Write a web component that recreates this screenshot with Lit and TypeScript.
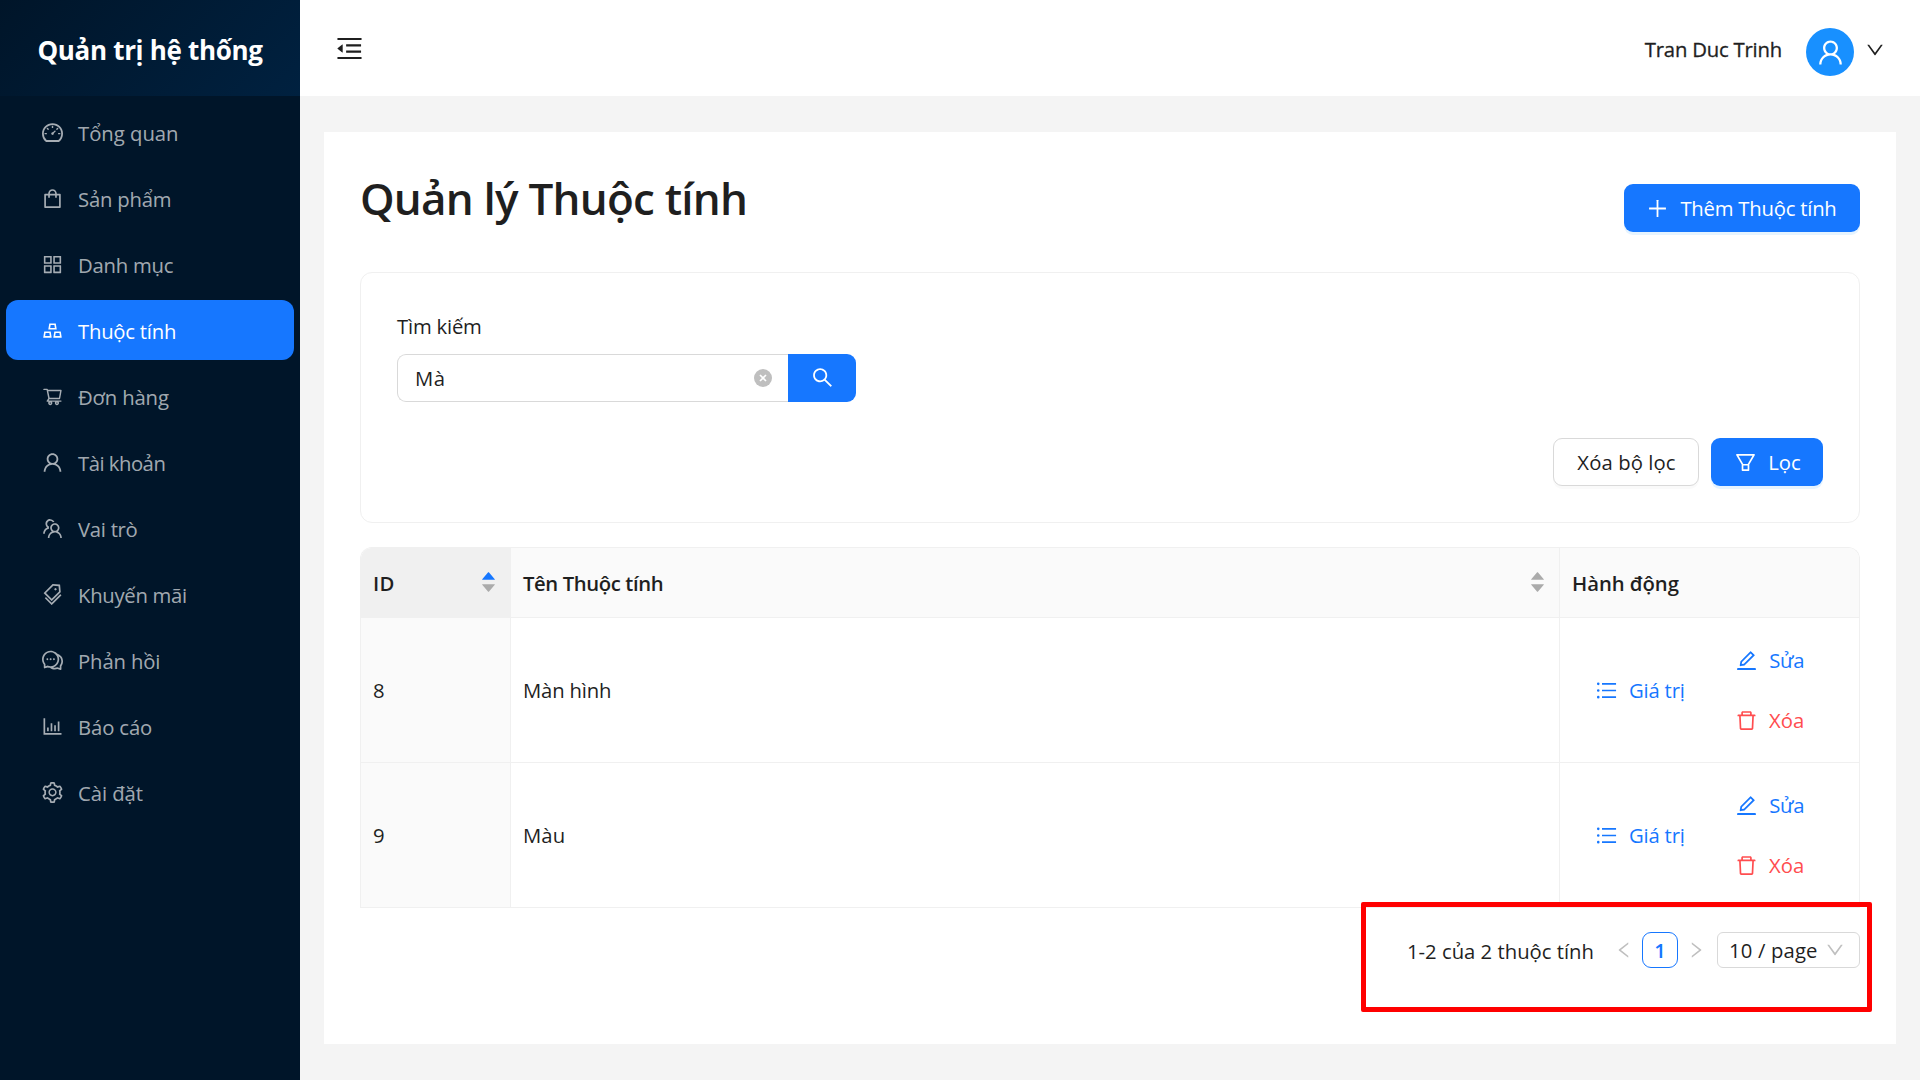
import { LitElement, html, css, svg } from "lit";
import { styleMap } from "lit/directives/style-map.js";
import { classMap } from "lit/directives/class-map.js";

interface Icon {
  box?: string;
  paths: string[];
}

const ICONS: Record<string, Icon> = {
  menuFold: {
    paths: [
      "M408 442h480c4.4 0 8-3.6 8-8v-56c0-4.4-3.6-8-8-8H408c-4.4 0-8 3.6-8 8v56c0 4.4 3.6 8 8 8zm-8 204c0 4.4 3.6 8 8 8h480c4.4 0 8-3.6 8-8v-56c0-4.4-3.6-8-8-8H408c-4.4 0-8 3.6-8 8v56zm504-486H120c-4.4 0-8 3.6-8 8v56c0 4.4 3.6 8 8 8h784c4.4 0 8-3.6 8-8v-56c0-4.4-3.6-8-8-8zm0 632H120c-4.4 0-8 3.6-8 8v56c0 4.4 3.6 8 8 8h784c4.4 0 8-3.6 8-8v-56c0-4.4-3.6-8-8-8zM115.4 518.9L271.7 642c5.8 4.6 14.4.5 14.4-6.9V388.9c0-7.4-8.5-11.5-14.4-6.9L115.4 505.1a8.74 8.74 0 000 13.8z",
    ],
  },
  dashboard: {
    paths: [
      "M924.8 385.6a446.7 446.7 0 00-96-142.4 446.7 446.7 0 00-142.4-96C631.1 123.8 572.5 112 512 112s-119.1 11.8-174.4 35.2a446.7 446.7 0 00-142.4 96 446.7 446.7 0 00-96 142.4C75.8 440.9 64 499.5 64 560c0 132.7 58.3 257.7 159.9 343.1l1.7 1.4c5.8 4.8 13.1 7.5 20.6 7.5h531.7c7.5 0 14.8-2.7 20.6-7.5l1.7-1.4C901.7 817.7 960 692.7 960 560c0-60.5-11.9-119.1-35.2-174.4zM761.4 836H262.6A371.12 371.12 0 01140 560c0-99.4 38.7-192.8 109-263 70.3-70.3 163.7-109 263-109 99.4 0 192.8 38.7 263 109 70.3 70.3 109 163.7 109 263 0 105.6-44.5 205.5-122.6 276zM623.5 421.5a8.03 8.03 0 00-11.3 0L527.7 506c-18.7-5-39.4-.2-54.1 14.5a55.95 55.95 0 000 79.2 55.95 55.95 0 0079.2 0 55.87 55.87 0 0014.5-54.1l84.5-84.5c3.1-3.1 3.1-8.2 0-11.3l-28.3-28.3zM490 320h44c4.4 0 8-3.6 8-8v-80c0-4.4-3.6-8-8-8h-44c-4.4 0-8 3.6-8 8v80c0 4.4 3.6 8 8 8zm260 218v44c0 4.4 3.6 8 8 8h80c4.4 0 8-3.6 8-8v-44c0-4.4-3.6-8-8-8h-80c-4.4 0-8 3.6-8 8zm12.7-197.2l-31.1-31.1a8.03 8.03 0 00-11.3 0l-56.6 56.6a8.03 8.03 0 000 11.3l31.1 31.1c3.1 3.1 8.2 3.1 11.3 0l56.6-56.6c3.1-3.1 3.1-8.2 0-11.3zm-458.6-31.1a8.03 8.03 0 00-11.3 0l-31.1 31.1a8.03 8.03 0 000 11.3l56.6 56.6c3.1 3.1 8.2 3.1 11.3 0l31.1-31.1c3.1-3.1 3.1-8.2 0-11.3l-56.6-56.6zM262 530h-80c-4.4 0-8 3.6-8 8v44c0 4.4 3.6 8 8 8h80c4.4 0 8-3.6 8-8v-44c0-4.4-3.6-8-8-8z",
    ],
  },
  shopping: {
    paths: [
      "M832 312H696v-16c0-101.6-82.4-184-184-184s-184 82.4-184 184v16H192c-17.7 0-32 14.3-32 32v536c0 17.7 14.3 32 32 32h640c17.7 0 32-14.3 32-32V344c0-17.7-14.3-32-32-32zm-432-16c0-61.9 50.1-112 112-112s112 50.1 112 112v16H400v-16zm392 544H232V384h96v88c0 4.4 3.6 8 8 8h56c4.4 0 8-3.6 8-8v-88h224v88c0 4.4 3.6 8 8 8h56c4.4 0 8-3.6 8-8v-88h96v456z",
    ],
  },
  appstore: {
    paths: [
      "M464 144H160c-8.8 0-16 7.2-16 16v304c0 8.8 7.2 16 16 16h304c8.8 0 16-7.2 16-16V160c0-8.8-7.2-16-16-16zm-52 268H212V212h200v200zm452-268H560c-8.8 0-16 7.2-16 16v304c0 8.8 7.2 16 16 16h304c8.8 0 16-7.2 16-16V160c0-8.8-7.2-16-16-16zm-52 268H612V212h200v200zM464 544H160c-8.8 0-16 7.2-16 16v304c0 8.8 7.2 16 16 16h304c8.8 0 16-7.2 16-16V560c0-8.8-7.2-16-16-16zm-52 268H212V612h200v200zm452-268H560c-8.8 0-16 7.2-16 16v304c0 8.8 7.2 16 16 16h304c8.8 0 16-7.2 16-16V560c0-8.8-7.2-16-16-16zm-52 268H612V612h200v200z",
    ],
  },
  gold: {
    paths: [
      "M342 472h342c.4 0 .9 0 1.3-.1 4.4-.7 7.3-4.8 6.6-9.2l-40.2-248c-.6-3.9-4-6.7-7.9-6.7H382.2c-3.9 0-7.3 2.8-7.9 6.7l-40.2 248c-.1.4-.1.9-.1 1.3 0 4.4 3.6 8 8 8zm91.2-196h159.5l20.7 128h-201l20.8-128zm2.5 282.7c-.6-3.9-4-6.7-7.9-6.7H166.2c-3.9 0-7.3 2.8-7.9 6.7l-40.2 248c-.1.4-.1.9-.1 1.3 0 4.4 3.6 8 8 8h342c.4 0 .9 0 1.3-.1 4.4-.7 7.3-4.8 6.6-9.2l-40.2-248zM196.5 748l20.7-128h159.5l20.7 128H196.5zm709.4 58.7l-40.2-248c-.6-3.9-4-6.7-7.9-6.7H596.2c-3.9 0-7.3 2.8-7.9 6.7l-40.2 248c-.1.4-.1.9-.1 1.3 0 4.4 3.6 8 8 8h342c.4 0 .9 0 1.3-.1 4.3-.7 7.3-4.8 6.6-9.2zM626.5 748l20.7-128h159.5l20.7 128H626.5z",
    ],
  },
  cart: {
    box: "0 0 1024 1024",
    paths: [
      "M922.9 701.9H327.4l29.9-60.9 496.8-.9c16.8 0 31.2-12 34.2-28.6l68.8-385.1c1.8-10.1-.9-20.5-7.5-28.4a34.99 34.99 0 00-26.6-12.5l-632-2.1-5.4-25.4c-3.4-16.2-18-28-34.6-28H96.5a35.3 35.3 0 100 70.6h125.9L246 312.8l58.1 281.3-74.8 122.1a34.96 34.96 0 00-3 36.8c6 11.9 18.1 19.4 31.5 19.4h62.8a102.43 102.43 0 00-20.6 61.7c0 56.6 46 102.6 102.6 102.6s102.6-46 102.6-102.6c0-22.3-7.4-44-20.6-61.7h161.1a102.43 102.43 0 00-20.6 61.7c0 56.6 46 102.6 102.6 102.6s102.6-46 102.6-102.6c0-22.3-7.4-44-20.6-61.7H923c19.4 0 35.3-15.8 35.3-35.3a35.42 35.42 0 00-35.4-35.2zM305.7 253l575.8 1.9-56.4 315.8-452.3.8L305.7 253zm96.9 612.7c-17.4 0-31.6-14.2-31.6-31.6 0-17.4 14.2-31.6 31.6-31.6s31.6 14.2 31.6 31.6a31.6 31.6 0 01-31.6 31.6zm325.1 0c-17.4 0-31.6-14.2-31.6-31.6 0-17.4 14.2-31.6 31.6-31.6s31.6 14.2 31.6 31.6a31.6 31.6 0 01-31.6 31.6z",
    ],
  },
  user: {
    paths: [
      "M858.5 763.6a374 374 0 00-80.6-119.5 375.63 375.63 0 00-119.5-80.6c-.4-.2-.8-.3-1.2-.5C719.5 518 760 444.7 760 362c0-137-111-248-248-248S264 225 264 362c0 82.7 40.5 156 102.8 201.1-.4.2-.8.3-1.2.5-44.8 18.9-85 46-119.5 80.6a375.63 375.63 0 00-80.6 119.5A371.7 371.7 0 00136 901.8a8 8 0 008 8.2h60c4.4 0 7.9-3.5 8-7.8 2-77.2 33-149.5 87.8-204.3 56.7-56.7 132-87.9 212.2-87.9s155.5 31.2 212.2 87.9C779 752.7 810 825 812 902.2c.1 4.4 3.6 7.8 8 7.8h60a8 8 0 008-8.2c-1-47.8-10.9-94.3-29.5-138.2zM512 534c-45.9 0-89.1-17.9-121.6-50.4S340 407.9 340 362c0-45.9 17.9-89.1 50.4-121.6S466.1 190 512 190s89.1 17.9 121.6 50.4S684 316.1 684 362c0 45.9-17.9 89.1-50.4 121.6S557.9 534 512 534z",
    ],
  },
  team: {
    paths: [
      "M824.2 699.9a301.55 301.55 0 00-86.4-60.4C783.1 602.8 812 546.8 812 484c0-110.8-92.4-201.7-203.2-200-109.1 1.7-197 90.6-197 200 0 62.8 29 118.8 74.2 155.5a300.95 300.95 0 00-86.4 60.4C345 754.6 314 826.8 312 903.8a8 8 0 008 8.2h56c4.3 0 7.9-3.4 8-7.7 1.9-58 25.4-112.3 66.7-153.5A226.62 226.62 0 01612 684c60.9 0 118.2 23.7 161.3 66.8C814.6 792 838 846.3 840 904.3c.1 4.3 3.7 7.7 8 7.7h56a8 8 0 008-8.2c-2-77-33-149.2-87.8-203.9zM612 612c-34.2 0-66.4-13.3-90.5-37.5a126.86 126.86 0 01-37.5-91.8c.3-32.8 13.4-64.5 36.3-88 24-24.6 56.1-38.3 90.4-38.7 33.9-.3 66.8 12.9 91 36.6 24.8 24.3 38.4 56.8 38.4 91.4 0 34.2-13.3 66.3-37.5 90.5A127.3 127.3 0 01612 612zM361.5 510.4c-.9-8.7-1.4-17.5-1.4-26.4 0-15.9 1.5-31.4 4.3-46.5.7-3.6-1.2-7.3-4.5-8.8-13.6-6.1-26.1-14.5-36.9-25.1a127.54 127.54 0 01-38.7-95.4c.9-32.1 13.8-62.6 36.3-85.6 24.7-25.3 57.9-39.1 93.2-38.7 31.9.3 62.7 12.6 86 34.4 7.9 7.4 14.7 15.6 20.4 24.4 2 3.1 5.9 4.4 9.3 3.2 17.6-6.1 36.2-10.4 55.3-12.4 5.6-.6 8.8-6.6 6.3-11.6-32.5-64.3-98.9-108.7-175.7-109.9-110.9-1.7-203.3 89.2-203.3 199.9 0 62.8 28.9 118.8 74.2 155.5-31.8 14.7-61.1 35-86.5 60.4-54.8 54.7-85.8 126.9-87.8 204a8 8 0 008 8.2h56.1c4.3 0 7.9-3.4 8-7.7 1.9-58 25.4-112.3 66.7-153.5 29.4-29.4 65.4-49.8 104.7-59.7 3.9-1 6.5-4.7 6-8.7z",
    ],
  },
  tags: {
    paths: [
      "M483.2 790.3L861.4 412c1.7-1.7 2.5-4 2.3-6.3l-25.5-301.4c-.7-7.8-6.8-13.9-14.6-14.6L522.2 64.3c-2.3-.2-4.7.6-6.3 2.3L137.7 444.8a8.03 8.03 0 000 11.3l334.2 334.2c3.1 3.2 8.2 3.2 11.3 0zm62.6-651.7l224.6 19 19 224.6L477.5 694 233.9 450.5l311.9-311.9zm60.16 186.23a48 48 0 1067.88-67.89 48 48 0 10-67.88 67.89zM889.7 539.8l-39.6-39.5a8.03 8.03 0 00-11.3 0l-362 361.3-237.6-237a8.03 8.03 0 00-11.3 0l-39.6 39.5a8.03 8.03 0 000 11.3l243.2 242.8 39.6 39.5c3.1 3.1 8.2 3.1 11.3 0l407.3-406.6c3.1-3.1 3.1-8.2 0-11.3z",
    ],
  },
  comment: {
    paths: [
      "M573 421c-23.1 0-41 17.9-41 40s17.9 40 41 40c21.1 0 39-17.9 39-40s-17.9-40-39-40zm-280 0c-23.1 0-41 17.9-41 40s17.9 40 41 40c21.1 0 39-17.9 39-40s-17.9-40-39-40z",
      "M894 345a343.92 343.92 0 00-189-130v.1c-17.1-19-36.4-36.5-58-52.1-163.7-119-393.5-82.7-513 81-96.3 133-92.2 311.9 6 439l.8 132.6c0 3.2.5 6.4 1.5 9.4a31.95 31.95 0 0040.1 20.9L309 806c33.5 11.9 68.1 18.7 102.5 20.6l-.5.4c89.1 64.9 205.9 84.4 313 49l127.1 41.4c3.2 1 6.5 1.6 9.9 1.6 17.7 0 32-14.3 32-32V753c88.1-119.6 90.4-284.9 1-408zM323 735l-12-5-99 31-1-104-8-9c-84.6-103.2-90.2-251.9-11-361 96.4-132.2 281.2-161.4 413-66 132.2 96.1 161.5 280.6 66 412-80.1 109.9-223.5 150.5-348 102zm505-17l-8 10 1 104-98-33-12 5c-56 20.8-115.7 22.5-171 7l-.2-.1A367.31 367.31 0 00729 676c76.4-105.3 88.8-237.6 44.4-350.4l.6.4c23 16.5 44.1 37.1 62 62 72.6 99.6 68.5 235.2-8 330z",
      "M433 421c-23.1 0-41 17.9-41 40s17.9 40 41 40c21.1 0 39-17.9 39-40s-17.9-40-39-40z",
    ],
  },
  barChart: {
    paths: [
      "M888 792H200V168c0-4.4-3.6-8-8-8h-56c-4.4 0-8 3.6-8 8v688c0 4.4 3.6 8 8 8h752c4.4 0 8-3.6 8-8v-56c0-4.4-3.6-8-8-8zm-600-80h56c4.4 0 8-3.6 8-8V560c0-4.4-3.6-8-8-8h-56c-4.4 0-8 3.6-8 8v144c0 4.4 3.6 8 8 8zm152 0h56c4.4 0 8-3.6 8-8V384c0-4.4-3.6-8-8-8h-56c-4.4 0-8 3.6-8 8v320c0 4.4 3.6 8 8 8zm152 0h56c4.4 0 8-3.6 8-8V462c0-4.4-3.6-8-8-8h-56c-4.4 0-8 3.6-8 8v242c0 4.4 3.6 8 8 8zm152 0h56c4.4 0 8-3.6 8-8V304c0-4.4-3.6-8-8-8h-56c-4.4 0-8 3.6-8 8v400c0 4.4 3.6 8 8 8z",
    ],
  },
  setting: {
    paths: [
      "M924.8 625.7l-65.5-56c3.1-19 4.7-38.4 4.7-57.8s-1.6-38.8-4.7-57.8l65.5-56a32.03 32.03 0 009.3-35.2l-.9-2.6a443.74 443.74 0 00-79.7-137.9l-1.8-2.1a32.12 32.12 0 00-35.1-9.5l-81.3 28.9c-30-24.6-63.5-44-99.7-57.6l-15.7-85a32.05 32.05 0 00-25.8-25.7l-2.7-.5c-52.1-9.4-106.9-9.4-159 0l-2.7.5a32.05 32.05 0 00-25.8 25.7l-15.8 85.4a351.86 351.86 0 00-99 57.4l-81.9-29.1a32 32 0 00-35.1 9.5l-1.8 2.1a446.02 446.02 0 00-79.7 137.9l-.9 2.6c-4.5 12.5-.8 26.5 9.3 35.2l66.3 56.6c-3.1 18.8-4.6 38-4.6 57.1 0 19.2 1.5 38.4 4.6 57.1L99 625.5a32.03 32.03 0 00-9.3 35.2l.9 2.6c18.1 50.4 44.9 96.9 79.7 137.9l1.8 2.1a32.12 32.12 0 0035.1 9.5l81.9-29.1c29.8 24.5 63.1 43.9 99 57.4l15.8 85.4a32.05 32.05 0 0025.8 25.7l2.7.5a449.4 449.4 0 00159 0l2.7-.5a32.05 32.05 0 0025.8-25.7l15.7-85a350 350 0 0099.7-57.6l81.3 28.9a32 32 0 0035.1-9.5l1.8-2.1c34.8-41.1 61.6-87.5 79.7-137.9l.9-2.6c4.5-12.3.8-26.3-9.3-35zM788.3 465.9c2.5 15.1 3.8 30.6 3.8 46.1s-1.3 31-3.8 46.1l-6.6 40.1 74.7 63.9a370.03 370.03 0 01-42.6 73.6L721 702.8l-31.4 25.8c-23.9 19.6-50.5 35-79.3 45.8l-38.1 14.3-17.9 97a377.5 377.5 0 01-85 0l-17.9-97.2-37.8-14.5c-28.5-10.8-55-26.2-78.7-45.7l-31.4-25.9-93.4 33.2c-17-22.9-31.2-47.6-42.6-73.6l75.5-64.5-6.5-40c-2.4-14.9-3.7-30.3-3.7-45.5 0-15.3 1.2-30.6 3.7-45.5l6.5-40-75.5-64.5c11.3-26.1 25.6-50.7 42.6-73.6l93.4 33.2 31.4-25.9c23.7-19.5 50.2-34.9 78.7-45.7l37.9-14.3 17.9-97.2c28.1-3.2 56.8-3.2 85 0l17.9 97 38.1 14.3c28.7 10.8 55.4 26.2 79.3 45.8l31.4 25.8 92.8-32.9c17 22.9 31.2 47.6 42.6 73.6L781.8 426l6.5 39.9zM512 326c-97.2 0-176 78.8-176 176s78.8 176 176 176 176-78.8 176-176-78.8-176-176-176zm79.2 255.2A111.6 111.6 0 01512 614c-29.9 0-58-11.7-79.2-32.8A111.6 111.6 0 01400 502c0-29.9 11.7-58 32.8-79.2C454 401.6 482.1 390 512 390c29.9 0 58 11.6 79.2 32.8A111.6 111.6 0 01624 502c0 29.9-11.7 58-32.8 79.2z",
    ],
  },
  plus: {
    paths: [
      "M482 152h60q8 0 8 8v704q0 8-8 8h-60q-8 0-8-8V160q0-8 8-8z",
      "M192 474h672q8 0 8 8v60q0 8-8 8H160q-8 0-8-8v-60q0-8 8-8z",
    ],
  },
  search: {
    paths: [
      "M909.6 854.5L649.9 594.8C690.2 542.7 712 479 712 412c0-80.2-31.3-155.4-87.9-212.1-56.6-56.7-132-87.9-212.1-87.9s-155.5 31.3-212.1 87.9C143.2 256.5 112 331.8 112 412c0 80.1 31.3 155.5 87.9 212.1C256.5 680.8 331.8 712 412 712c67 0 130.6-21.8 182.7-62l259.7 259.6a8.2 8.2 0 0011.6 0l43.6-43.5a8.2 8.2 0 000-11.6zM570.4 570.4C528 612.7 471.8 636 412 636s-116-23.3-158.4-65.6C211.3 528 188 471.8 188 412s23.3-116.1 65.6-158.4C296 211.3 352.2 188 412 188s116.1 23.2 158.4 65.6S636 352.2 636 412s-23.3 116.1-65.6 158.4z",
    ],
  },
  filter: {
    paths: [
      "M880.1 154H143.9c-24.5 0-39.8 26.7-27.5 48L349 597.4V838c0 17.7 14.2 32 31.8 32h262.4c17.6 0 31.8-14.3 31.8-32V597.4L907.7 202c12.2-21.3-3.1-48-27.6-48zM603.4 798H420.6V642h182.9v156zm9.6-236.6l-9.5 16.6h-183l-9.5-16.6L212.7 226h598.6L613 561.4z",
    ],
  },
  down: {
    paths: [
      "M884 256h-75c-5.1 0-9.9 2.5-12.9 6.6L512 654.2 227.9 262.6c-3-4.1-7.8-6.6-12.9-6.6h-75c-6.5 0-10.3 7.4-6.5 12.7l352.6 486.1c12.8 17.6 39 17.6 51.7 0l352.6-486.1c3.9-5.3.1-12.7-6.4-12.7z",
    ],
  },
  left: {
    paths: [
      "M724 218.3V141c0-6.7-7.7-10.4-12.9-6.3L260.3 486.8a31.86 31.86 0 000 50.3l450.8 352.1c5.3 4.1 12.9.4 12.9-6.3v-77.3c0-4.9-2.3-9.6-6.1-12.6l-360-281 360-281.1c3.8-3 6.1-7.7 6.1-12.6z",
    ],
  },
  right: {
    paths: [
      "M765.7 486.8L314.9 134.7A7.97 7.97 0 00302 141v77.3c0 4.9 2.3 9.6 6.1 12.6l360 281.1-360 281.1c-3.9 3-6.1 7.7-6.1 12.6V883c0 6.7 7.7 10.4 12.9 6.3l450.8-352.1a31.96 31.96 0 000-50.4z",
    ],
  },
  list: {
    paths: [
      "M912 192H328c-4.4 0-8 3.6-8 8v56c0 4.4 3.6 8 8 8h584c4.4 0 8-3.6 8-8v-56c0-4.4-3.6-8-8-8zm0 284H328c-4.4 0-8 3.6-8 8v56c0 4.4 3.6 8 8 8h584c4.4 0 8-3.6 8-8v-56c0-4.4-3.6-8-8-8zm0 284H328c-4.4 0-8 3.6-8 8v56c0 4.4 3.6 8 8 8h584c4.4 0 8-3.6 8-8v-56c0-4.4-3.6-8-8-8zM104 228a56 56 0 10112 0 56 56 0 10-112 0zm0 284a56 56 0 10112 0 56 56 0 10-112 0zm0 284a56 56 0 10112 0 56 56 0 10-112 0z",
    ],
  },
  edit: {
    paths: [
      "M257.7 752c2 0 4-.2 6-.5L431.9 722c2-.4 3.9-1.3 5.3-2.8l423.9-423.9a9.96 9.96 0 000-14.1L694.9 114.9c-1.9-1.9-4.4-2.9-7.1-2.9s-5.2 1-7.1 2.9L256.8 538.8c-1.5 1.5-2.4 3.3-2.8 5.3l-29.5 168.2a33.5 33.5 0 009.4 29.8c6.6 6.4 14.9 9.9 23.8 9.9zm67.4-174.4L687.8 215l73.3 73.3-362.7 362.6-88.9 15.7 15.6-89zM880 836H144c-17.7 0-32 14.3-32 32v36c0 4.4 3.6 8 8 8h784c4.4 0 8-3.6 8-8v-36c0-17.7-14.3-32-32-32z",
    ],
  },
  trash: {
    paths: [
      "M360 184h-8c4.4 0 8-3.6 8-8v8h304v-8c0 4.4 3.6 8 8 8h-8v72h72v-80c0-35.3-28.7-64-64-64H352c-35.3 0-64 28.7-64 64v80h72v-72zm504 72H160c-17.7 0-32 14.3-32 32v32c0 4.4 3.6 8 8 8h60.4l24.7 523c1.6 34.1 29.8 61 63.9 61h454c34.2 0 62.3-26.8 63.9-61l24.7-523H888c4.4 0 8-3.6 8-8v-32c0-17.7-14.3-32-32-32zM731.3 840H292.7l-24.2-512h487l-24.2 512z",
    ],
  },
  caretUp: {
    box: "153 292 718 440",
    paths: [
      "M858.9 689L530.5 308.2c-9.4-10.9-27.5-10.9-37 0L165.1 689c-12.2 14.2-1.2 35 18.5 35h656.8c19.7 0 30.7-20.8 18.5-35z",
    ],
  },
  caretDown: {
    box: "153 292 718 440",
    paths: [
      "M840.4 300H183.6c-19.7 0-30.7 20.8-18.5 35l328.4 380.8c9.4 10.9 27.5 10.9 37 0L858.9 335c12.2-14.2 1.2-35-18.5-35z",
    ],
  },
};

const icon = (name: string, cls = "") => {
  const def = ICONS[name];
  return html`<svg class="icon ${cls}" viewBox=${def.box ?? "64 64 896 896"} aria-hidden="true">
    ${def.paths.map((d) => svg`<path d=${d}></path>`)}
  </svg>`;
};

/** A run of text with its own tracking, in pixels. */
const label = (text: string, tracking = 0, cls = "") =>
  html`<span class="label ${cls}" style=${styleMap({ letterSpacing: `${tracking}px` })}>${text}</span>`;

const MENU: { icon: string; text: string; tracking: number; active?: boolean }[] = [
  { icon: "dashboard", text: "Tổng quan", tracking: -0.02 },
  { icon: "shopping", text: "Sản phẩm", tracking: -0.2 },
  { icon: "appstore", text: "Danh mục", tracking: -0.23 },
  { icon: "gold", text: "Thuộc tính", tracking: -0.23, active: true },
  { icon: "cart", text: "Đơn hàng", tracking: -0.15 },
  { icon: "user", text: "Tài khoản", tracking: -0.5 },
  { icon: "team", text: "Vai trò", tracking: -0.28 },
  { icon: "tags", text: "Khuyến mãi", tracking: -0.28 },
  { icon: "comment", text: "Phản hồi", tracking: -0.13 },
  { icon: "barChart", text: "Báo cáo", tracking: -0.12 },
  { icon: "setting", text: "Cài đặt", tracking: -0.05 },
];

const ROWS = [
  { id: 8, name: "Màn hình", tracking: -0.18 },
  { id: 9, name: "Màu", tracking: 0.1 },
];

class AppRoot extends LitElement {
  static styles = css`
    :host {
      display: block;
      font-family: "Open Sans", "Noto Sans", "Segoe UI", sans-serif;
      font-size: 20.3px;
      line-height: 32px;
      color: #1f1f1f;
    }
    * {
      box-sizing: border-box;
    }
    .layout {
      display: flex;
      width: 1920px;
      height: 1080px;
      background: #f4f4f4;
      overflow: hidden;
      position: relative;
    }
    .icon {
      width: 21px;
      height: 21px;
      fill: currentColor;
      flex: none;
      display: block;
    }
    .icon.large {
      width: 27px;
      height: 27px;
    }
    .icon.small {
      width: 18px;
      height: 18px;
    }
    .label {
      display: block;
      white-space: nowrap;
    }
    .lower {
      padding-top: 2px;
    }

    .sider {
      width: 300px;
      flex: none;
      background: #001529;
    }
    .brand {
      height: 96px;
      padding-top: 4px;
      display: flex;
      align-items: center;
      justify-content: center;
      background: linear-gradient(135deg, #001529 0%, #002140 100%);
      color: #fff;
      font-size: 26px;
      font-weight: 700;
    }
    .menu {
      display: flex;
      flex-direction: column;
      gap: 6px;
      padding: 6px;
    }
    .item {
      display: flex;
      align-items: center;
      gap: 15px;
      height: 60px;
      padding: 0 36px;
      border-radius: 12px;
      color: rgba(255, 255, 255, 0.65);
    }
    .item.active {
      background: #1677ff;
      color: #fff;
    }

    .main {
      flex: 1;
      min-width: 0;
      display: flex;
      flex-direction: column;
    }
    .header {
      height: 96px;
      flex: none;
      display: flex;
      align-items: center;
      justify-content: space-between;
      padding: 0 36px;
      background: #fff;
    }
    .account {
      display: flex;
      align-items: center;
    }
    .user-name {
      font-weight: 500;
      margin-right: 24px;
      -webkit-text-stroke: 0.3px currentColor;
    }
    .avatar {
      width: 48px;
      height: 48px;
      margin: 8px 12px 0 0;
      border-radius: 50%;
      background: #1890ff;
      color: #fff;
      display: flex;
      align-items: center;
      justify-content: center;
    }
    .icon.expand {
      margin-top: 3px;
    }

    .page {
      flex: 1;
      margin: 36px 24px;
      padding: 36px;
      background: #fff;
      display: flex;
      flex-direction: column;
    }
    .title-row {
      display: flex;
      align-items: center;
      justify-content: space-between;
      height: 80px;
      margin-bottom: 24px;
    }
    .title {
      margin: 0;
      align-self: flex-start;
      font-size: 44px;
      line-height: 61px;
      font-weight: 600;
      letter-spacing: -0.78px;
    }
    .btn {
      height: 48px;
      padding: 0 24px;
      display: flex;
      align-items: center;
      justify-content: center;
      gap: 12px;
      border: 0;
      border-radius: 9px;
      background: none;
      font: inherit;
      color: inherit;
    }
    .btn.primary {
      background: #1677ff;
      color: #fff;
      box-shadow: 0 3px 0 rgba(5, 145, 255, 0.1);
    }
    .btn.outline {
      width: 146px;
      padding: 0 0 0 1px;
      border: 1px solid #d9d9d9;
      background: #fff;
      box-shadow: 0 3px 0 rgba(0, 0, 0, 0.02);
    }
    .btn.add {
      width: 236px;
      padding: 0;
    }
    .btn.apply {
      width: 112px;
      padding: 0 0 0 2px;
    }
    .btn.link {
      color: #1677ff;
    }
    .btn.value {
      width: 136px;
      justify-content: flex-start;
    }
    .btn.link.danger {
      color: #ff4d4f;
    }

    .filters {
      height: 251px;
      flex: none;
      border: 1px solid #f0f0f0;
      border-radius: 12px;
      padding: 36px;
      display: flex;
      flex-direction: column;
    }
    .field-label {
      height: 34px;
      line-height: 34px;
      margin-bottom: 11px;
    }
    .search {
      display: flex;
      width: 459px;
      height: 48px;
    }
    .search-box {
      flex: 1;
      display: flex;
      align-items: center;
      justify-content: space-between;
      padding: 0 16px 0 17px;
      border: 1px solid #d9d9d9;
      border-right: 0;
      border-radius: 9px 0 0 9px;
    }
    .clear {
      width: 18px;
      height: 18px;
      display: block;
    }
    .search-btn {
      width: 68px;
      height: 48px;
      padding: 0 0 1px;
      border: 0;
      border-radius: 0 9px 9px 0;
      background: #1677ff;
      color: #fff;
      display: flex;
      align-items: center;
      justify-content: center;
    }
    .filter-actions {
      margin-top: 36px;
      display: flex;
      justify-content: flex-end;
      gap: 12px;
    }

    .table {
      margin-top: 24px;
      flex: none;
      border: 1px solid #f0f0f0;
      border-bottom: 0;
      border-radius: 12px 12px 0 0;
      overflow: hidden;
    }
    .row {
      display: grid;
      grid-template-columns: 150px 1049px 299px;
      height: 145px;
    }
    .row.head {
      height: 70px;
      background: #fafafa;
      font-weight: 600;
    }
    .cell {
      display: flex;
      align-items: center;
      padding: 0 12px;
      border-right: 1px solid #f0f0f0;
      border-bottom: 1px solid #f0f0f0;
    }
    .cell:last-child {
      border-right: 0;
    }
    .head .cell {
      justify-content: space-between;
    }
    .cell.sorted {
      background: #fafafa;
    }
    .head .cell.sorted {
      background: #f0f0f0;
    }
    .sorter {
      width: 18px;
      margin-bottom: 1px;
      padding-right: 1px;
      display: flex;
      flex-direction: column;
      align-items: center;
      gap: 4px;
      color: #ababab;
    }
    .icon.caret {
      width: 13px;
      height: 8px;
    }
    .icon.on {
      color: #1677ff;
    }
    .cell.actions {
      gap: 4px;
    }
    .stack {
      display: flex;
      flex-direction: column;
      gap: 12px;
    }

    .pagination {
      margin-top: 24px;
      display: flex;
      align-items: center;
      justify-content: flex-end;
      height: 36px;
    }
    .total {
      margin-right: 12px;
    }
    .pager {
      width: 36px;
      height: 36px;
      display: flex;
      align-items: center;
      justify-content: center;
      color: #bfbfbf;
    }
    .pager.current {
      border: 1px solid #1677ff;
      border-radius: 9px;
      color: #1677ff;
      font-weight: 600;
    }
    .size-select {
      width: 143px;
      height: 36px;
      margin-left: 3px;
      padding: 0 15px 0 11px;
      border: 1px solid #d9d9d9;
      border-radius: 6px;
      display: flex;
      align-items: center;
      justify-content: space-between;
    }
    .size-select .icon {
      color: #bfbfbf;
    }

    .highlight {
      position: absolute;
      left: 1361px;
      top: 902px;
      width: 511px;
      height: 110px;
      border: 5px solid #ff0000;
      border-radius: 2px;
      pointer-events: none;
    }
  `;

  private sorter(ascending: boolean) {
    return html`<span class="sorter">
      ${icon("caretUp", ascending ? "caret on" : "caret")} ${icon("caretDown", "caret")}
    </span>`;
  }

  private sider() {
    return html`<nav class="sider">
      <div class="brand">${label("Quản trị hệ thống", -0.32)}</div>
      <div class="menu">
        ${MENU.map(
          (m) => html`<div class=${classMap({ item: true, active: !!m.active })}>
            ${icon(m.icon)} ${label(m.text, m.tracking, "lower")}
          </div>`,
        )}
      </div>
    </nav>`;
  }

  private header() {
    return html`<header class="header">
      ${icon("menuFold", "large")}
      <div class="account">
        ${label("Tran Duc Trinh", -0.2, "user-name lower")}
        <span class="avatar">${icon("user", "large")}</span>
        ${icon("down", "small expand")}
      </div>
    </header>`;
  }

  private filters() {
    return html`<section class="filters">
      ${label("Tìm kiếm", -0.2, "field-label")}
      <div class="search">
        <div class="search-box">
          ${label("Mà", 0.5)}
          <svg class="clear" viewBox="0 0 18 18" aria-hidden="true">
            <circle cx="9" cy="9" r="9" fill="#bfbfbf"></circle>
            <path d="M6 6l6 6M12 6l-6 6" stroke="#fff" stroke-width="1.7" fill="none"></path>
          </svg>
        </div>
        <button class="search-btn">${icon("search")}</button>
      </div>
      <div class="filter-actions">
        <button class="btn outline">${label("Xóa bộ lọc", 0.1)}</button>
        <button class="btn primary apply">${icon("filter")} ${label("Lọc", 0)}</button>
      </div>
    </section>`;
  }

  private table() {
    return html`<section class="table">
      <div class="row head">
        <div class="cell sorted">${label("ID", 0.4)} ${this.sorter(true)}</div>
        <div class="cell">${label("Tên Thuộc tính", -0.39)} ${this.sorter(false)}</div>
        <div class="cell">${label("Hành động", -0.05)}</div>
      </div>
      ${ROWS.map(
        (r) => html`<div class="row">
          <div class="cell sorted">${r.id}</div>
          <div class="cell">${label(r.name, r.tracking)}</div>
          <div class="cell actions">
            <button class="btn link value">${icon("list")} ${label("Giá trị", -0.2)}</button>
            <div class="stack">
              <button class="btn link">${icon("edit")} ${label("Sửa", -0.3)}</button>
              <button class="btn link danger">${icon("trash")} ${label("Xóa", 0.1)}</button>
            </div>
          </div>
        </div>`,
      )}
    </section>`;
  }

  private pagination() {
    return html`<div class="pagination">
      ${label("1-2 của 2 thuộc tính", 0, "total lower")}
      <span class="pager">${icon("left", "small")}</span>
      <span class="pager current">1</span>
      <span class="pager">${icon("right", "small")}</span>
      <div class="size-select">${label("10 / page", 0.15)} ${icon("down", "small")}</div>
    </div>`;
  }

  render() {
    return html`<div class="layout">
      ${this.sider()}
      <div class="main">
        ${this.header()}
        <main class="page">
          <div class="title-row">
            <h1 class="title">Quản lý Thuộc tính</h1>
            <button class="btn primary add">${icon("plus")} ${label("Thêm Thuộc tính", -0.22)}</button>
          </div>
          ${this.filters()} ${this.table()} ${this.pagination()}
        </main>
      </div>
      <div class="highlight"></div>
    </div>`;
  }
}

customElements.define("app-root", AppRoot);
